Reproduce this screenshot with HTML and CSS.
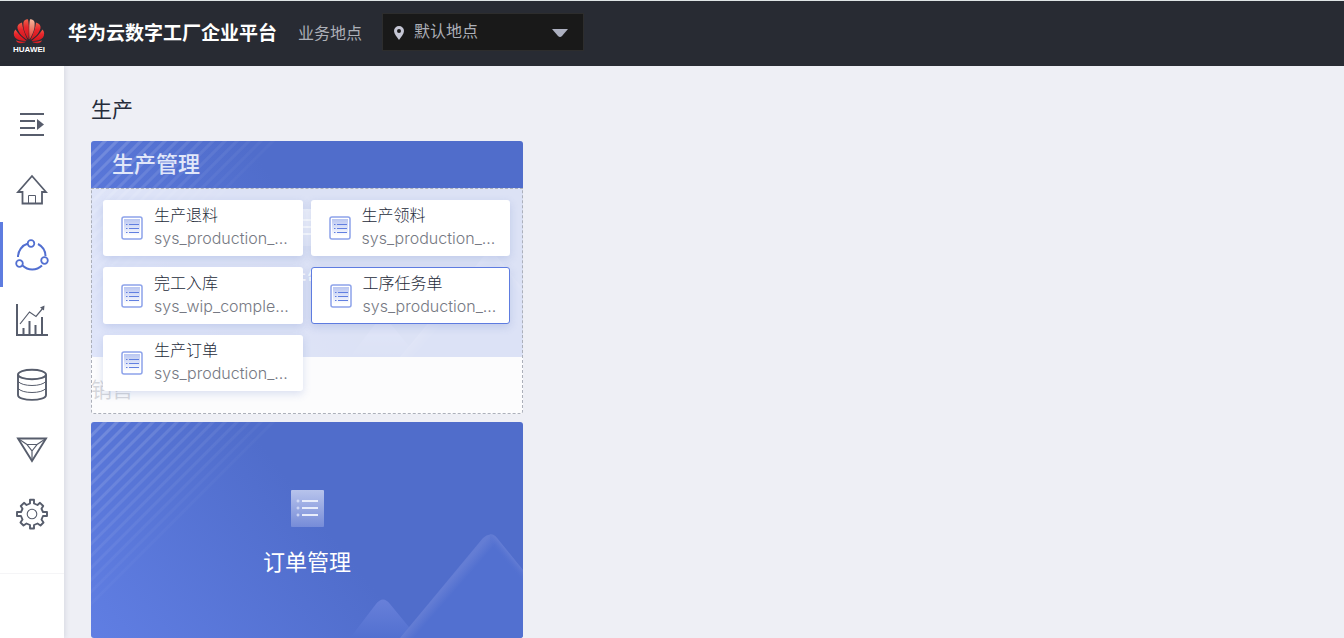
FILE: index.html
```html
<!DOCTYPE html>
<html lang="zh-CN">
<head>
<meta charset="utf-8">
<title>华为云数字工厂企业平台</title>
<link rel="stylesheet" href="styles.css">
</head>
<body>
<svg class="defs" aria-hidden="true">
  <defs>
    <linearGradient id="sky" gradientUnits="userSpaceOnUse" x1="0" y1="216" x2="200" y2="60">
      <stop offset="0" stop-color="#607ee3"/><stop offset="1" stop-color="#506dcb"/>
    </linearGradient>
    <linearGradient id="fade" gradientUnits="userSpaceOnUse" x1="0" y1="0" x2="95" y2="95">
      <stop offset="0" stop-color="#fff" stop-opacity=".17"/><stop offset="1" stop-color="#fff" stop-opacity=".02"/>
    </linearGradient>
    <linearGradient id="peak-small" x1="0" y1="0" x2="0" y2="1">
      <stop offset="0" stop-color="#6880d9"/><stop offset="1" stop-color="#5270d0"/>
    </linearGradient>
    <linearGradient id="peak-edge" gradientUnits="userSpaceOnUse" x1="354" y1="164" x2="362" y2="171">
      <stop offset="0" stop-color="#647dd4"/><stop offset="1" stop-color="#5270d0"/>
    </linearGradient>
    <linearGradient id="peak-right" gradientUnits="userSpaceOnUse" x1="420" y1="133" x2="413" y2="139">
      <stop offset="0" stop-color="#647dd4"/><stop offset="1" stop-color="#5270d0" stop-opacity="0"/>
    </linearGradient>
    <linearGradient id="sheet" x1="0" y1="0" x2="0" y2="1">
      <stop offset="0" stop-color="#b7c3ec"/><stop offset="1" stop-color="#768cd8"/>
    </linearGradient>
    <linearGradient id="sheet-light" x1="0" y1="0" x2="0" y2="1">
      <stop offset="0" stop-color="#b9c6f1"/><stop offset="1" stop-color="#fff"/>
    </linearGradient>
    <linearGradient id="petal" x1="0" y1="0" x2="0" y2="1">
      <stop offset="0" stop-color="#f0604a"/><stop offset=".4" stop-color="#e8262c"/><stop offset="1" stop-color="#d2161d"/>
    </linearGradient>
    <linearGradient id="petal-lit" x1="0" y1="0" x2="0" y2="1">
      <stop offset="0" stop-color="#f8b79c"/><stop offset="1" stop-color="#e23a30"/>
    </linearGradient>
  </defs>
  <symbol id="art" viewBox="0 0 432 216">
    <rect width="432" height="216" fill="url(#sky)"/>
    <path d="M-2 16 16-2M-2 28 28-2M-2 40 40-2M-2 52 52-2M-2 64 64-2M-2 76 76-2M-2 88 88-2M-2 100 100-2M-2 112 112-2M-2 124 124-2M-2 136 136-2M-2 148 148-2M-2 160 160-2M-2 172 172-2M-2 184 184-2" stroke="url(#fade)" stroke-width="3" fill="none"/>
    <path d="M259 216 285 182Q292 173 299 182L327 216Z" fill="url(#peak-small)"/>
    <path d="M309 216 392 116Q399 109 406 116L432 148V216Z" fill="url(#peak-edge)"/>
    <path d="M399 112Q403 112 406 116L432 148V160L399 122Z" fill="url(#peak-right)"/>
  </symbol>
  <symbol id="list" viewBox="0 0 33 37">
    <rect width="33" height="37" rx="1" fill="url(#sheet)"/>
    <path d="M11 11H27M11 18H27M11 25H27" stroke="#e8edfb" stroke-width="2"/>
    <path d="M5.500 11H8.500M5.500 18H8.500M5.500 25H8.500M7 9.500V12.500M7 16.500V19.500M7 23.500V26.500" stroke="#e0e6fa"/>
  </symbol>
  <symbol id="doc" viewBox="0 0 22 24">
    <rect x="1" y="1" width="20" height="22" rx="2" fill="#fff" stroke="#8da3ea" stroke-width="1.500"/>
    <path d="M3 3H19V20H3Z" fill="url(#sheet-light)"/>
    <path d="M8 8.500H18M8 12.500H18M8 16.500H18M5 8.500H6.500M5 12.500H6.500M5 16.500H6.500" stroke="#617fe0"/>
  </symbol>
</svg>

<header class="topbar">
  <svg class="logo" viewBox="0 0 32 36" role="img" aria-label="HUAWEI">
    <g fill="url(#petal)">
      <path d="M15.500 21.500C11.500 15 9.800 10 10.500 4 11.500 1.500 14 .8 15 1.500 16 6 16 14 15.500 21.500Z"/>
      <path d="M16.500 21.500C20.500 15 22.200 10 21.500 4 20.500 1.500 18 .8 17 1.500 16 6 16 14 16.500 21.500Z" fill="url(#petal-lit)"/>
      <path d="M14.500 22C11.500 15 9.500 10 9 4.500 5.500 5.500 4 7.500 4.500 10.500 6 15.500 10 19.500 14.500 22Z"/>
      <path d="M17.500 22C20.500 15 22.500 10 23 4.500 26.500 5.500 28 7.500 27.500 10.500 26 15.500 22 19.500 17.500 22Z"/>
      <path d="M13.500 23C9 19.500 5.500 16 2.500 11.500 .5 13.500 .2 17 2 19.500 5 22.500 9 23.200 13.500 23Z"/>
      <path d="M18.500 23C23 19.500 26.500 16 29.500 11.500 31.500 13.500 31.800 17 30 19.500 27 22.500 23 23.200 18.500 23Z"/>
      <path d="M13 23.800C9.500 24 6 23.600 3 22.500 4 25 8 26.500 13 23.800Z"/>
      <path d="M19 23.800C22.500 24 26 23.600 29 22.500 28 25 24 26.500 19 23.800Z"/>
    </g>
    <text class="logo-name" x="16" y="34" text-anchor="middle">HUAWEI</text>
  </svg>
  <h1 class="brand">华为云数字工厂企业平台</h1>
  <label class="site-label" for="site">业务地点</label>
  <div class="site-field">
    <svg class="pin" viewBox="0 0 10 14" aria-hidden="true"><path fill-rule="evenodd" d="M5 0A5 5 0 0 1 10 5C10 8 7 11 5 14 3 11 0 8 0 5A5 5 0 0 1 5 0ZM5 3A2 2 0 1 0 5 7 2 2 0 0 0 5 3Z" fill="currentColor"/></svg>
    <select id="site" class="site-select"><option>默认地点</option></select>
    <svg class="caret" viewBox="0 0 16 8" aria-hidden="true"><path d="M0 0H16L10 7Q8 9 6 7Z" fill="currentColor"/></svg>
  </div>
</header>

<div class="shell">
  <aside class="sidebar">
    <nav class="nav">
      <button class="nav-item" type="button" aria-label="展开菜单"><svg viewBox="0 0 32 32"><path d="M4 5H28M4 12H19M4 19H19M4 26H28" stroke-width="2"/><path class="solid" d="M21 10 28 15.500 21 21Z"/></svg></button>
      <a class="nav-item" href="#home" aria-label="首页"><svg viewBox="0 0 32 32"><path d="M2 18 16 2 30 18H26V29.500H6.500V18Z" stroke-width="1.800"/><path d="M12.500 29V21.500H19.500V29" stroke-width="1"/></svg></a>
      <a class="nav-item active" href="#flow" aria-label="流程" aria-current="page"><svg viewBox="0 0 32 32"><path d="M2 18A14 14 0 0 1 12 4.500M22 5A14 14 0 0 1 29.500 17M26 26.500A14 14 0 0 1 6.500 26.500" stroke-width="2"/><circle cx="15" cy="4.500" r="3.300" stroke-width="1.800"/><circle cx="28.500" cy="21.500" r="3.300" stroke-width="1.800"/><circle cx="3.500" cy="24.500" r="3.300" stroke-width="1.800"/></svg></a>
      <a class="nav-item" href="#report" aria-label="报表"><svg viewBox="0 0 32 32"><path d="M1 0V31H32" stroke-width="2"/><path d="M7.500 30V24M13.500 30V17M19.500 30V21M26 30V13" stroke-width="2"/><path d="M4 20 13.500 8 20 12.500 27 4" stroke-width="1.200"/><path class="solid" d="M24 3.500 28.500 1.500 28 6.500Z"/></svg></a>
      <a class="nav-item" href="#data" aria-label="数据"><svg viewBox="0 0 32 32"><ellipse cx="16" cy="5.500" rx="14" ry="4.800" stroke-width="1.900"/><path d="M2 5.500V26C2 32.500 30 32.500 30 26V5.500" stroke-width="1.900"/><path d="M2 12C5 18 27 18 30 12M2 19C5 25 27 25 30 19" stroke-width="1"/></svg></a>
      <a class="nav-item" href="#asset" aria-label="资产"><svg viewBox="0 0 32 32"><path d="M2 4.500H30L16 27Z" stroke-width="1.900"/><path d="M16 27V17L11 10.500H21L16 17M2 4.500 11 10.500M30 4.500 21 10.500" stroke-width="1.200"/></svg></a>
      <a class="nav-item" href="#settings" aria-label="设置"><svg viewBox="0 0 32 32"><path d="M14 .800H18V4.500L21.500 6 24 3.800 27.200 7 25.500 9.800 27 13H31V17H27L25.500 20.500 27.500 23.500 24.500 26.500 21.500 24.500 18 26V29.500H14V26L10.500 24.500 7.500 26.500 4.500 23.500 6.500 20.500 5 17H1V13H5L6.500 9.800 4.800 7 8 3.800 10.500 6 14 4.500Z" stroke-width="1.900" stroke-linejoin="round"/><circle cx="16" cy="15" r="4.800" stroke-width="1.100"/></svg></a>
    </nav>
  </aside>

  <main class="content">
    <h2 class="section-title">生产</h2>
    <div class="modules">
      <section class="module">
        <div class="under" aria-hidden="true">
          <div class="cover"><svg class="art" preserveAspectRatio="none"><use href="#art"/></svg><svg class="list-icon"><use href="#list"/></svg><span class="cover-name">生产管理</span></div>
          <span class="next-title">销售</span>
        </div>
        <h3 class="module-title">生产管理</h3>
        <div class="panel">
          <a class="tile" href="#return"><svg class="doc"><use href="#doc"/></svg><span class="tile-text"><span class="name">生产退料</span><span class="code">sys_production_...</span></span></a>
          <a class="tile" href="#pick"><svg class="doc"><use href="#doc"/></svg><span class="tile-text"><span class="name">生产领料</span><span class="code">sys_production_...</span></span></a>
          <a class="tile" href="#complete"><svg class="doc"><use href="#doc"/></svg><span class="tile-text"><span class="name">完工入库</span><span class="code">sys_wip_comple...</span></span></a>
          <a class="tile current" href="#task"><svg class="doc"><use href="#doc"/></svg><span class="tile-text"><span class="name">工序任务单</span><span class="code">sys_production_...</span></span></a>
          <a class="tile" href="#order"><svg class="doc"><use href="#doc"/></svg><span class="tile-text"><span class="name">生产订单</span><span class="code">sys_production_...</span></span></a>
        </div>
      </section>
      <a class="cover" href="#orders"><svg class="art" preserveAspectRatio="none" aria-hidden="true"><use href="#art"/></svg><svg class="list-icon" aria-hidden="true"><use href="#list"/></svg><span class="cover-name">订单管理</span></a>
    </div>
  </main>
</div>
</body>
</html>
```

FILE: styles.css
```css
* { box-sizing: border-box; }
body {
  margin: 0;
  min-height: 100vh;
  display: flex;
  flex-direction: column;
  background: #eeeff5;
  color: #252b3a;
  font-family: Roboto, "Noto Sans CJK SC", sans-serif;
  font-size: 16px;
}
h1, h2, h3 { margin: 0; }
a { color: inherit; text-decoration: none; }
.defs { position: absolute; width: 0; height: 0; }

.topbar {
  display: flex;
  align-items: center;
  height: 66px;
  padding-left: 13px;
  border-top: 1px solid #dfe5e5;
  background: #282b33;
  color: #adb0b8;
}
.logo { width: 32px; height: 36px; margin-top: 4px; }
.logo-name { font: bold 8px "Liberation Sans", sans-serif; fill: #fff; }
.brand { margin-left: 23px; font-size: 19px; font-weight: 700; line-height: 28px; color: #fff; }
.site-label { margin: 0 20px 4px 21px; }
.site-field { position: relative; width: 202px; height: 38px; margin-bottom: 4px; }
.site-select {
  width: 100%;
  height: 100%;
  padding: 0 31px;
  border: 1px solid #2d2d2d;
  border-radius: 0;
  appearance: none;
  background: #191919;
  color: #adb0b8;
  font: inherit;
}
.pin { position: absolute; left: 12px; top: 13px; width: 10px; height: 14px; color: #c5c6d4; }
.caret { position: absolute; right: 16px; top: 16px; width: 16px; height: 8px; color: #adb0c0; pointer-events: none; }

.shell { flex: 1; display: flex; }
.sidebar { width: 64px; background: #fff; box-shadow: 1px 0 5px rgba(40, 50, 80, .12); }
.nav { display: flex; flex-direction: column; padding: 26px 0; border-bottom: 1px solid #f5f5f7; }
.nav-item {
  display: grid;
  place-items: center;
  height: 65px;
  padding: 0 4px 0 0;
  border: 0;
  border-left: 3px solid transparent;
  background: none;
  color: #575d6c;
}
.nav-item.active { border-left-color: #5e7ce0; color: #526fd1; }
.nav-item svg { width: 32px; height: 32px; overflow: visible; fill: none; stroke: currentColor; }
.nav-item .solid { fill: currentColor; stroke: none; }

.content { flex: 1; padding: 27px 27px 0; }
.section-title { height: 48px; font-size: 21px; font-weight: 400; line-height: 34px; }
.modules { display: grid; grid-template-columns: repeat(auto-fill, 432px); gap: 8px; }
.modules > * { grid-column: 1; }
.module { position: relative; }
.under { position: absolute; inset: 0; overflow: hidden; }
.next-title { display: block; padding-top: 17px; font-size: 21px; line-height: 32px; color: #33394a; }
.module-title {
  position: relative;
  height: 47px;
  padding-left: 21px;
  font-size: 22px;
  font-weight: 500;
  line-height: 48px;
  color: #e1e7f9;
}
.panel {
  position: relative;
  display: grid;
  grid-template-columns: 1fr 1fr;
  gap: 11px 8px;
  padding: 11px 12px 22px 11px;
  border: 1px dashed #acb0ba;
  border-radius: 0 0 3px 3px;
  background: rgba(255, 255, 255, .8);
}
.tile {
  display: flex;
  align-items: center;
  gap: 11px;
  height: 56px;
  padding-left: 18px;
  border-radius: 3px;
  background: #fff;
  box-shadow: 0 3px 8px rgba(80, 110, 190, .2);
}
.tile:nth-child(n + 3) { height: 57px; }
.tile:nth-child(n + 5) { height: 56px; }
.tile.current { border: 1px solid #5e7ce0; }
.doc { width: 22px; height: 24px; }
.tile-text { display: flex; flex-direction: column; padding-bottom: 2px; line-height: 23px; }
.name { font-weight: 300; }
.code { font-family: Inter, sans-serif; font-size: 16px; font-weight: 300; color: #767983; }

.cover {
  position: relative;
  display: flex;
  flex-direction: column;
  align-items: center;
  height: 216px;
  overflow: hidden;
  border-radius: 3px;
  color: #fff;
}
.art { position: absolute; inset: 0; width: 100%; height: 100%; }
.list-icon { position: relative; flex: none; width: 33px; height: 37px; margin-top: 68px; }
.cover-name { position: relative; margin-top: 20px; font-size: 22px; line-height: 32px; }
```
